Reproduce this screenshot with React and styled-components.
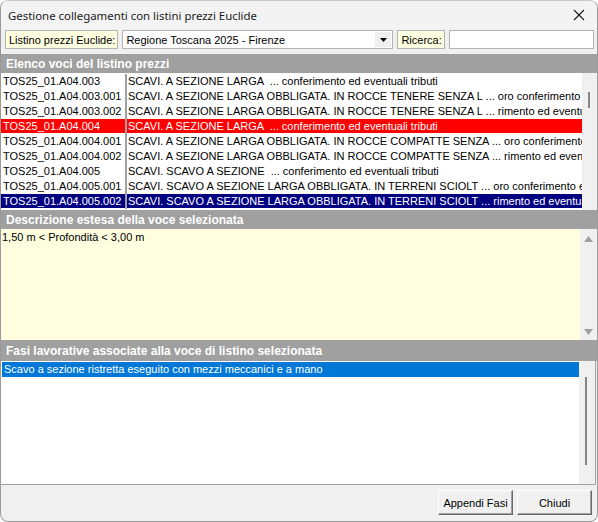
import React from 'react'
import styled, { createGlobalStyle } from 'styled-components'

const GlobalStyle = createGlobalStyle`
  html, body {
    margin: 0;
    padding: 0;
    background: #ffffff;
  }
`

const voci = [
  { code: 'TOS25_01.A04.003', text: 'SCAVI. A SEZIONE LARGA  ... conferimento ed eventuali tributi' },
  { code: 'TOS25_01.A04.003.001', text: 'SCAVI. A SEZIONE LARGA OBBLIGATA. IN ROCCE TENERE SENZA L ... oro conferimento ed eventuali tributi' },
  { code: 'TOS25_01.A04.003.002', text: 'SCAVI. A SEZIONE LARGA OBBLIGATA. IN ROCCE TENERE SENZA L ... rimento ed eventuali tributi' },
  { code: 'TOS25_01.A04.004', text: 'SCAVI. A SEZIONE LARGA  ... conferimento ed eventuali tributi', mark: 'red' },
  { code: 'TOS25_01.A04.004.001', text: 'SCAVI. A SEZIONE LARGA OBBLIGATA. IN ROCCE COMPATTE SENZA ... oro conferimento ed eventuali tributi' },
  { code: 'TOS25_01.A04.004.002', text: 'SCAVI. A SEZIONE LARGA OBBLIGATA. IN ROCCE COMPATTE SENZA ... rimento ed eventuali tributi' },
  { code: 'TOS25_01.A04.005', text: 'SCAVI. SCAVO A SEZIONE  ... conferimento ed eventuali tributi' },
  { code: 'TOS25_01.A04.005.001', text: 'SCAVI. SCAVO A SEZIONE LARGA OBBLIGATA. IN TERRENI SCIOLT ... oro conferimento ed eventuali tributi' },
  { code: 'TOS25_01.A04.005.002', text: 'SCAVI. SCAVO A SEZIONE LARGA OBBLIGATA. IN TERRENI SCIOLT ... rimento ed eventuali tributi', mark: 'navy' },
]

const markColors = {
  red: '#ff0000',
  navy: '#000080',
}

export const App = () => {
  return (
    <Window>
      <GlobalStyle />
      <TitleBar>
        <Title>Gestione collegamenti con listini prezzi Euclide</Title>
        <CloseButton>
          <svg width="12" height="12" viewBox="0 0 12 12">
            <path d="M1 1 L11 11 M11 1 L1 11" stroke="#1a1a1a" strokeWidth="1.1" />
          </svg>
        </CloseButton>
      </TitleBar>

      <Toolbar>
        <Label>Listino prezzi Euclide:</Label>
        <Combo>
          <ComboText>Regione Toscana 2025 - Firenze</ComboText>
          <ComboArrow>
            <svg width="7" height="4" viewBox="0 0 7 4">
              <path d="M0 0 H7 L3.5 4 Z" fill="#000" />
            </svg>
          </ComboArrow>
        </Combo>
        <Label>Ricerca:</Label>
        <SearchBox />
      </Toolbar>

      <SectionHeader>Elenco voci del listino prezzi</SectionHeader>
      <ListArea>
        <Rows>
          {voci.map((v) => (
            <Row key={v.code}>
              <CodeCell $bg={markColors[v.mark]}>{v.code}</CodeCell>
              <Divider />
              <TextCell $bg={markColors[v.mark]}>{v.text}</TextCell>
            </Row>
          ))}
        </Rows>
        <ThinScroll>
          <Thumb $top={19} $height={16} />
        </ThinScroll>
      </ListArea>

      <SectionHeader>Descrizione estesa della voce selezionata</SectionHeader>
      <DescArea>
        <DescText>1,50 m &lt; Profondità &lt; 3,00 m</DescText>
        <ArrowScroll>
          <svg width="9" height="6" viewBox="0 0 9 6">
            <path d="M0 6 L4.5 0 L9 6 Z" fill="#a0a0a0" />
          </svg>
          <svg width="9" height="6" viewBox="0 0 9 6">
            <path d="M0 0 H9 L4.5 6 Z" fill="#a0a0a0" />
          </svg>
        </ArrowScroll>
      </DescArea>

      <SectionHeader $tall>Fasi lavorative associate alla voce di listino selezionata</SectionHeader>
      <FasiArea>
        <FasiRows>
          <FasiRow $selected>Scavo a sezione ristretta eseguito con mezzi meccanici e a mano</FasiRow>
        </FasiRows>
        <FasiScroll>
          <Thumb $top={16} $height={88} />
        </FasiScroll>
      </FasiArea>

      <ButtonBar>
        <Button>Appendi Fasi</Button>
        <Button>Chiudi</Button>
      </ButtonBar>
    </Window>
  )
}

const Window = styled.div`
  width: 598px;
  height: 522px;
  box-sizing: border-box;
  border: 1px solid #9a9a9a;
  border-top-color: #c8c8c8;
  border-radius: 8px;
  background: #f0f0f0;
  display: flex;
  flex-direction: column;
  overflow: hidden;
  font-family: 'Liberation Sans', Arial, sans-serif;
  font-size: 11px;
  color: #000;
`

const TitleBar = styled.div`
  height: 28px;
  background: #f3f3f3;
  display: flex;
  align-items: center;
  justify-content: space-between;
  padding: 0 0 0 7px;
  flex-shrink: 0;
`

const Title = styled.span`
  font-family: 'Noto Sans', 'Open Sans', sans-serif;
  font-size: 11.4px;
  color: #1a1a1a;
`

const CloseButton = styled.div`
  width: 36px;
  height: 28px;
  display: flex;
  align-items: center;
  justify-content: center;
`

const Toolbar = styled.div`
  display: flex;
  align-items: stretch;
  gap: 4px;
  height: 19px;
  padding: 1px 3px 0 4px;
  margin-bottom: 5px;
`

const Label = styled.div`
  background: #ffffe1;
  border: 1px solid #b4b4b4;
  padding: 0 2px 0 3px;
  display: flex;
  align-items: center;
  white-space: nowrap;
`

const Combo = styled.div`
  width: 271px;
  box-sizing: border-box;
  background: #fff;
  border: 1px solid #b4b4b4;
  display: flex;
  align-items: center;
`

const ComboText = styled.span`
  flex: 1;
  padding-left: 3px;
`

const ComboArrow = styled.div`
  width: 16px;
  align-self: stretch;
  background: #f0f0f0;
  display: flex;
  align-items: center;
  justify-content: center;
  margin: 1px;
`

const SearchBox = styled.div`
  flex: 1;
  background: #fff;
  border: 1px solid #b4b4b4;
`

const SectionHeader = styled.div`
  height: ${(p) => (p.$tall ? '21px' : '19px')};
  background: #a0a0a0;
  color: #fff;
  font-weight: bold;
  font-size: 12px;
  display: flex;
  align-items: center;
  padding-left: 5px;
  flex-shrink: 0;
`

const ListArea = styled.div`
  height: 137px;
  display: flex;
  background: #fff;
  flex-shrink: 0;
`

const Rows = styled.div`
  flex: 1;
  min-width: 0;
  padding-top: 1px;
`

const Row = styled.div`
  display: flex;
  height: 15px;
`

const CodeCell = styled.div`
  width: 124px;
  box-sizing: border-box;
  padding-left: 2px;
  height: 14px;
  line-height: 14px;
  white-space: nowrap;
  background: ${(p) => p.$bg || 'transparent'};
  color: ${(p) => (p.$bg ? '#fff' : '#000')};
`

const Divider = styled.div`
  width: 2px;
  background: #a0a0a0;
  height: 15px;
`

const TextCell = styled.div`
  flex: 1;
  min-width: 0;
  height: 14px;
  line-height: 14px;
  padding-left: 1px;
  white-space: pre;
  overflow: hidden;
  background: ${(p) => p.$bg || 'transparent'};
  color: ${(p) => (p.$bg ? '#fff' : '#000')};
`

const ThinScroll = styled.div`
  width: 15px;
  background: #f0f0f0;
  position: relative;
  flex-shrink: 0;
`

const Thumb = styled.div`
  position: absolute;
  left: 6px;
  top: ${(p) => p.$top}px;
  width: 2px;
  height: ${(p) => p.$height}px;
  background: #858585;
`

const DescArea = styled.div`
  height: 111px;
  display: flex;
  background: #ffffe0;
  flex-shrink: 0;
`

const DescText = styled.div`
  flex: 1;
  padding: 2px 0 0 1px;
`

const ArrowScroll = styled.div`
  width: 17px;
  background: #f0f0f0;
  display: flex;
  flex-direction: column;
  justify-content: space-between;
  align-items: center;
  padding: 7px 0 5px;
`

const FasiArea = styled.div`
  height: 123px;
  display: flex;
  background: #fff;
  border-bottom: 1px solid #a0a0a0;
  border-right: 1px solid #a0a0a0;
  margin-right: 1px;
  flex-shrink: 0;
`

const FasiRows = styled.div`
  flex: 1;
  padding: 1px 0 0 1px;
`

const FasiRow = styled.div`
  height: 15px;
  line-height: 15px;
  padding-left: 2px;
  background: ${(p) => (p.$selected ? '#0078d7' : 'transparent')};
  color: ${(p) => (p.$selected ? '#fff' : '#000')};
`

const FasiScroll = styled.div`
  width: 16px;
  background: #f0f0f0;
  position: relative;
`

const ButtonBar = styled.div`
  flex: 1;
  display: flex;
  justify-content: flex-end;
  align-items: flex-start;
  gap: 4px;
  padding: 5px 5px 0 0;
`

const Button = styled.div`
  width: 75px;
  height: 25px;
  box-sizing: border-box;
  background: #f0f0f0;
  border: 1px solid;
  border-color: #ffffff #696969 #696969 #ffffff;
  box-shadow: inset -1px -1px #a0a0a0;
  display: flex;
  align-items: center;
  justify-content: center;
  font-size: 11px;
`

export default App
